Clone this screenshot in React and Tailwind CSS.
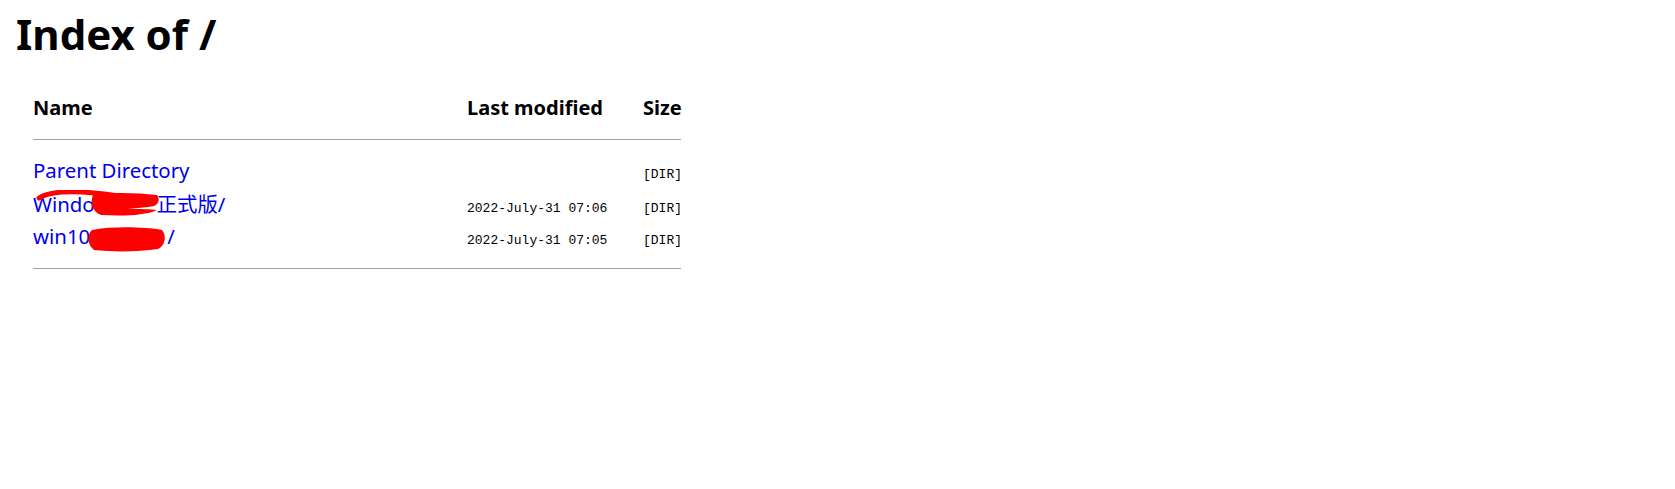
import React from 'react'

const sans = { fontFamily: '"Noto Sans", "Noto Sans CJK SC", sans-serif' }
const mono = { fontFamily: '"Liberation Mono", monospace' }

const rows = [
  { key: 'parent', name: 'Parent Directory', date: '', size: '[DIR]', h: 'h-[34px]' },
  { key: 'win', name: ['Windo', 62, '正式版/'], date: '2022-July-31 07:06', size: '[DIR]', mark: 'a', h: 'h-[32px]' },
  { key: 'w10', name: ['win10', 77, '/'], date: '2022-July-31 07:05', size: '[DIR]', mark: 'b', h: 'h-[33px]' },
]

// marker scribbles drawn over the hidden parts of names
const Scribble = ({ kind }) => {
  if (kind === 'a') {
    return (
      <svg className="absolute left-0 top-0 pointer-events-none" width="140" height="34" viewBox="0 0 140 34">
        <path d="M6 8 C14 3 30 1 50 2 C62 3 72 4 86 6" stroke="#ff0000" strokeWidth="5" fill="none" strokeLinecap="round" />
        <path d="M60 5 C80 2 104 3 124 5 C127 9 126 14 121 16 C110 18 100 18 95 19 C108 19 118 19 124 20 C112 26 88 26 68 25 C59 22 57 12 60 5 Z" fill="#ff0000" />
      </svg>
    )
  }
  return (
    <svg className="absolute left-0 top-0 pointer-events-none" width="140" height="34" viewBox="0 0 140 34">
      <path d="M59 8 C80 4 112 5 129 8 C134 14 132 24 125 27 C105 30 80 30 61 28 C54 23 54 12 59 8 Z" fill="#ff0000" />
    </svg>
  )
}

const App = () => {
  return (
    <div className="min-h-screen w-full bg-white text-black" style={sans}>
      <h1 className="pl-[16px] pt-[6px] text-[42px] font-bold leading-[56px]">Index of /</h1>

      <div className="ml-[33px] mt-[32px] w-[648px]">
        <div className="grid grid-cols-[434px_176px_1fr] items-baseline text-[20px] font-bold leading-[28px]">
          <span>Name</span>
          <span>Last modified</span>
          <span className="text-right">Size</span>
        </div>
        <div className="mt-[17px] border-t border-[#a0a0a0]" />

        <div className="pt-[16px] pb-[13px]">
          {rows.map((r) => (
            <div key={r.key} className={`relative grid ${r.h} grid-cols-[434px_176px_1fr] items-baseline`}>
              <a href="#" className="text-[20.4px] leading-[28px] text-[#0000ee]">
                {Array.isArray(r.name) ? (
                  <>
                    {r.name[0]}
                    <span className="inline-block" style={{ width: r.name[1] }} />
                    {r.name[2]}
                  </>
                ) : (
                  r.name
                )}
              </a>
              <span className="text-[13px]" style={mono}>{r.date}</span>
              <span className="text-right text-[13px]" style={mono}>{r.size}</span>
              {r.mark && <Scribble kind={r.mark} />}
            </div>
          ))}
        </div>
        <div className="border-t border-[#a0a0a0]" />
      </div>
    </div>
  )
}

export default App
